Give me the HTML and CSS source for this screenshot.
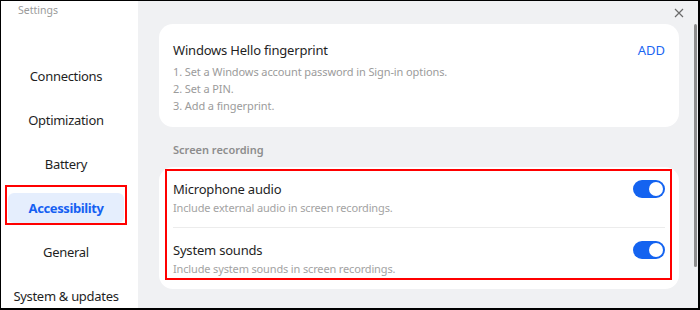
FILE: index.html
```html
<!DOCTYPE html>
<html lang="en">
<head>
    <meta charset="UTF-8">
    <title>Settings</title>
    <link rel="stylesheet" href="styles.css">
</head>
<body>
<div class="window">

    <!-- Left navigation -->
    <aside class="sidebar">
        <div class="app-title">Settings</div>
        <nav class="nav">
            <div class="nav-item">Connections</div>
            <div class="nav-item">Optimization</div>
            <div class="nav-item">Battery</div>
            <div class="nav-item active marked">Accessibility</div>
            <div class="nav-item">General</div>
            <div class="nav-item">System &amp; updates</div>
        </nav>
    </aside>

    <!-- Main panel -->
    <main class="main">
        <div class="topbar">
            <svg class="close" width="10" height="10" viewBox="0 0 10 10">
                <path d="M1 1 L9 9 M9 1 L1 9" stroke="#6b6b6b" stroke-width="1.2" fill="none"/>
            </svg>
        </div>
        <div class="main-body">
            <div class="content">
                <section class="card hello">
                    <div class="hello-head">
                        <div class="item-title">Windows Hello fingerprint</div>
                        <a class="add-link" href="#">ADD</a>
                    </div>
                    <div class="steps">
                        <div>1. Set a Windows account password in Sign-in options.</div>
                        <div>2. Set a PIN.</div>
                        <div>3. Add a fingerprint.</div>
                    </div>
                </section>

                <div class="section-label">Screen recording</div>

                <section class="card marked rows">
                    <div class="row">
                        <div class="row-head">
                            <div class="item-title">Microphone audio</div>
                            <span class="toggle on"></span>
                        </div>
                        <div class="item-desc">Include external audio in screen recordings.</div>
                    </div>
                    <div class="row">
                        <div class="row-head">
                            <div class="item-title">System sounds</div>
                            <span class="toggle on"></span>
                        </div>
                        <div class="item-desc">Include system sounds in screen recordings.</div>
                    </div>
                </section>
            </div>
            <div class="scrollbar"></div>
        </div>
    </main>

</div>
</body>
</html>
```

FILE: styles.css
```css
/* Base */
* {
    box-sizing: border-box;
}

body {
    margin: 0;
    font-family: 'Noto Sans', 'Open Sans', sans-serif;
    color: #1f1f1f;
    background: #000;
}

.window {
    display: flex;
    width: 700px;
    height: 310px;
    border: solid #000;
    border-width: 1px 2px 2px 1px;
    overflow: hidden;
    background: #f0f1f3;
}

/* Sidebar */
.sidebar {
    width: 137px;
    flex-shrink: 0;
    background: #fff;
    overflow: hidden;
}

.app-title {
    padding-left: 17px;
    font-size: 10.5px;
    line-height: 18px;
    color: #9a9a9a;
}

.nav {
    display: flex;
    flex-direction: column;
    gap: 14px;
    margin-top: 42px;
}

.nav-item {
    position: relative;
    width: 116px;
    height: 30px;
    margin-left: 7px;
    line-height: 30px;
    text-align: center;
    white-space: nowrap;
    font-size: 13px;
    letter-spacing: -0.3px;
    color: #1f1f1f;
    border-radius: 6px;
}

.nav-item.active {
    background: #e5eefd;
    color: #1560f2;
    font-weight: 700;
    letter-spacing: -0.4px;
}

/* red callout boxes */
.marked::after {
    content: "";
    position: absolute;
    border: 2px solid #f00;
    pointer-events: none;
}

.nav-item.marked::after {
    top: -8px;
    bottom: -2px;
    left: -3px;
    right: -3px;
}

/* Main panel */
.main {
    flex: 1;
    display: flex;
    flex-direction: column;
}

.topbar {
    height: 23px;
    display: flex;
    justify-content: flex-end;
    align-items: center;
    padding-right: 14px;
}

.main-body {
    flex: 1;
    display: flex;
}

.content {
    width: 541px;
    padding-left: 21px;
}

.scrollbar {
    width: 3px;
    height: 243px;
    margin-left: 15px;
    background: #8e8e8e;
    border-radius: 2px;
}

/* Cards */
.card {
    position: relative;
    background: #fff;
    border-radius: 14px;
    padding: 0 14px;
}

.hello {
    padding-top: 16px;
    padding-bottom: 13px;
}

.hello-head {
    display: flex;
    justify-content: space-between;
    align-items: center;
}

.item-title {
    font-size: 13px;
    letter-spacing: -0.2px;
    line-height: 20px;
    color: #1f1f1f;
}

.add-link {
    font-size: 13px;
    color: #1a66f2;
    text-decoration: none;
}

.steps {
    margin-top: 3px;
    font-size: 11px;
    letter-spacing: -0.1px;
    line-height: 17px;
    color: #9b9b9b;
}

.section-label {
    margin: 15px 0 9px 14px;
    font-size: 11px;
    line-height: 16px;
    font-weight: 600;
    color: #8d8d8d;
}

.rows.marked::after {
    top: 2px;
    left: 6px;
    right: 7px;
    bottom: 9px;
}

.row {
    padding: 12px 0 11px;
}

.row + .row {
    border-top: 1px solid #ececec;
    padding-bottom: 12px;
}

.row-head {
    display: flex;
    justify-content: space-between;
    align-items: center;
}

.item-desc {
    font-size: 11px;
    letter-spacing: -0.15px;
    line-height: 17px;
    color: #a3a3a3;
}

/* Toggle switch */
.toggle {
    position: relative;
    width: 32px;
    height: 18px;
    border-radius: 9px;
    background: #c8c8c8;
}

.toggle::before {
    content: "";
    position: absolute;
    top: 2px;
    left: 2px;
    width: 14px;
    height: 14px;
    border-radius: 50%;
    background: #fff;
}

.toggle.on {
    background: #1463f0;
}

.toggle.on::before {
    left: 16px;
}
```
